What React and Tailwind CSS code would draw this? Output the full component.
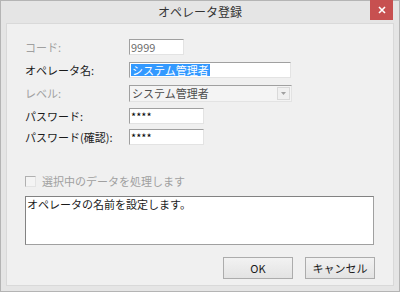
const font = { fontFamily: '"Noto Sans CJK JP", "Noto Sans", sans-serif' };

const Field = ({ w, children, className = "" }) => (
  <div
    className={`h-[16px] ${w} bg-white border border-t-[#a0a0a0] border-l-[#a0a0a0] border-b-[#e3e3e3] border-r-[#e3e3e3] flex items-center pl-[1px] text-[11px] leading-none ${className}`}
  >
    {children}
  </div>
);

const Row = ({ label, disabled, mt, children }) => (
  <div className={`flex items-center ${mt}`}>
    <div className={`w-[104px] text-[11px] leading-none ${disabled ? "text-[#a0a0a0]" : "text-[#1a1a1a]"}`}>
      {label}
    </div>
    {children}
  </div>
);

const Button = ({ children }) => (
  <button className="w-[70px] h-[22px] border border-[#acacac] bg-gradient-to-b from-[#f2f2f2] to-[#e3e3e3] text-[11px] text-[#1a1a1a] leading-none">
    {children}
  </button>
);

export default function App() {
  return (
    <div style={font} className="w-[400px] h-[292px] bg-[#e5e5e5] border border-[#b4b4b4] flex flex-col">
      {/* Title bar */}
      <div className="h-[22px] flex items-start relative shrink-0">
        <div className="flex-1 text-center text-[12px] text-[#333] pt-[5px] leading-none">オペレータ登録</div>
        <div className="absolute right-[6px] top-[-1px] w-[23px] h-[20px] bg-[#c75050] flex items-center justify-center">
          <svg width="8" height="8" viewBox="0 0 8 8">
            <path d="M1 1L7 7M7 1L1 7" stroke="#fff" strokeWidth="1.6" />
          </svg>
        </div>
      </div>

      {/* Client area */}
      <div className="mx-[5px] mb-[5px] flex-1 bg-[#f0f0f0] border border-[#d9d9d9] pl-[18px] pt-[15px] flex flex-col">
        <Row label="コード:" disabled mt="mt-0">
          <Field w="w-[55px]" className="text-[#6d6d6d]">9999</Field>
        </Row>
        <Row label="オペレータ名:" mt="mt-[7px]">
          <Field w="w-[162px]">
            <span className="bg-[#3399ff] text-white h-[12px] flex items-center px-[1px]">システム管理者</span>
          </Field>
        </Row>
        <Row label="レベル:" disabled mt="mt-[7px]">
          <div className="h-[17px] w-[163px] bg-[#f4f4f4] border border-t-[#a0a0a0] border-l-[#a0a0a0] border-b-[#e3e3e3] border-r-[#e3e3e3] flex items-center">
            <span className="flex-1 pl-[2px] text-[11px] text-[#4d4d4d] leading-none">システム管理者</span>
            <div className="w-[13px] h-[13px] mr-[1px] bg-[#f0f0f0] border border-[#d9d9d9] flex items-center justify-center">
              <svg width="5" height="3" viewBox="0 0 5 3">
                <path d="M0 0H5L2.5 3Z" fill="#a0a0a0" />
              </svg>
            </div>
          </div>
        </Row>
        <Row label="パスワード:" mt="mt-[6px]">
          <Field w="w-[75px]">****</Field>
        </Row>
        <Row label="パスワード(確認):" mt="mt-[5px]">
          <Field w="w-[75px]">****</Field>
        </Row>

        <div className="flex items-center mt-[31px] text-[11px] text-[#a0a0a0] leading-none">
          <div className="w-[11px] h-[11px] border border-t-[#b0b0b0] border-l-[#b0b0b0] border-b-[#e3e3e3] border-r-[#e3e3e3] bg-[#f4f4f4] mr-[6px]" />
          選択中のデータを処理します
        </div>

        <div className="mt-[9px] w-[349px] h-[49px] bg-white border border-t-[#828282] border-l-[#828282] border-b-[#a0a0a0] border-r-[#a0a0a0] pl-[1px] pt-[2px] text-[11px] text-[#1a1a1a] leading-none">
          オペレータの名前を設定します。
        </div>

        <div className="flex justify-end gap-[12px] w-[350px] mt-[12px]">
          <Button>OK</Button>
          <Button>キャンセル</Button>
        </div>
      </div>
    </div>
  );
}
